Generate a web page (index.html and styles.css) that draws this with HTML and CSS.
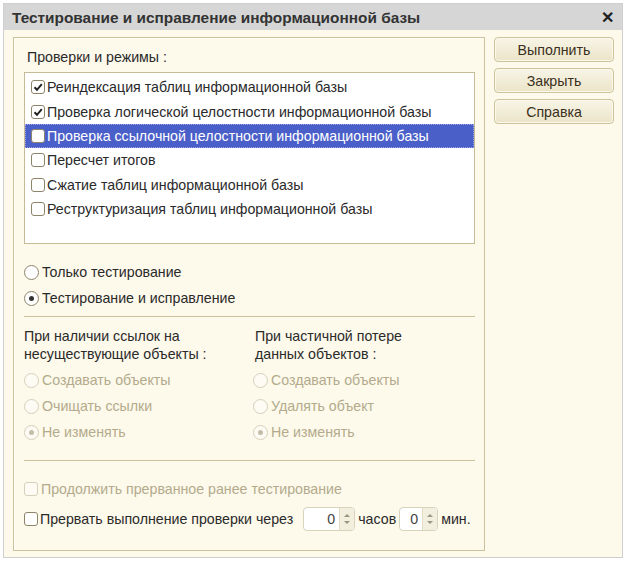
FILE: index.html
```html
<!DOCTYPE html>
<html lang="ru">
<head>
<meta charset="utf-8">
<link rel="stylesheet" href="styles.css">
</head>
<body>
<div class="window">
  <div class="titlebar">
    <span class="title">Тестирование и исправление информационной базы</span>
    <span class="close">✕</span>
  </div>
  <div class="content">
    <div class="group">
      <div class="label top-label">Проверки и режимы :</div>
      <div class="list">
        <div class="row"><span class="cb checked"><svg viewBox="0 0 14 14"><path d="M3.5 7.2 L6 9.8 L10.8 4.2" /></svg></span><span>Реиндексация таблиц информационной базы</span></div>
        <div class="row"><span class="cb checked"><svg viewBox="0 0 14 14"><path d="M3.5 7.2 L6 9.8 L10.8 4.2" /></svg></span><span>Проверка логической целостности информационной базы</span></div>
        <div class="row selected"><span class="cb"></span><span>Проверка ссылочной целостности информационной базы</span></div>
        <div class="row"><span class="cb"></span><span>Пересчет итогов</span></div>
        <div class="row"><span class="cb"></span><span>Сжатие таблиц информационной базы</span></div>
        <div class="row"><span class="cb"></span><span>Реструктуризация таблиц информационной базы</span></div>
      </div>
      <div class="modes">
        <div class="opt"><span class="radio"></span><span>Только тестирование</span></div>
        <div class="opt"><span class="radio on"></span><span>Тестирование и исправление</span></div>
      </div>
      <div class="sep"></div>
      <div class="cols">
        <div class="col">
          <div class="label">При наличии ссылок на<br>несуществующие объекты :</div>
          <div class="opt disabled"><span class="radio"></span><span>Создавать объекты</span></div>
          <div class="opt disabled"><span class="radio"></span><span>Очищать ссылки</span></div>
          <div class="opt disabled"><span class="radio on"></span><span>Не изменять</span></div>
        </div>
        <div class="col col2">
          <div class="label">При частичной потере<br>данных объектов :</div>
          <div class="opt disabled"><span class="radio"></span><span>Создавать объекты</span></div>
          <div class="opt disabled"><span class="radio"></span><span>Удалять объект</span></div>
          <div class="opt disabled"><span class="radio on"></span><span>Не изменять</span></div>
        </div>
      </div>
      <div class="sep sep2"></div>
      <div class="opt disabled cont"><span class="cb"></span><span>Продолжить прерванное ранее тестирование</span></div>
      <div class="opt stop">
        <span class="cb"></span><span class="stoptext">Прервать выполнение проверки через</span>
        <span class="spin wide"><span class="val">0</span><span class="arrows"><i class="up"></i><i class="down"></i></span></span>
        <span class="unit">часов</span>
        <span class="spin"><span class="val">0</span><span class="arrows"><i class="up"></i><i class="down"></i></span></span>
        <span class="unit">мин.</span>
      </div>
    </div>
    <div class="buttons">
      <button class="btn">Выполнить</button>
      <button class="btn">Закрыть</button>
      <button class="btn">Справка</button>
    </div>
  </div>
</div>
</body>
</html>
```
FILE: styles.css
```css
html, body {
  margin: 0;
  padding: 0;
  background: #ffffff;
}
body {
  font-family: "Liberation Sans", Arial, sans-serif;
  font-size: 14.2px;
  color: #2a2a2a;
}
.window {
  margin: 3px 0 0 3px;
  width: 620px;
  height: 555px;
  box-sizing: border-box;
  border: 1px solid #cfcfcf;
  background: #fdf9eb;
  display: flex;
  flex-direction: column;
}
.titlebar {
  height: 26px;
  background: #d6d6d6;
  display: flex;
  align-items: center;
  justify-content: space-between;
  padding: 1px 8px 0 8px;
  box-sizing: border-box;
  flex: none;
}
.title {
  font-weight: bold;
  font-size: 15.4px;
  color: #333;
}
.close {
  font-weight: bold;
  font-size: 16px;
  color: #222;
}
.content {
  flex: 1;
  display: flex;
  padding: 7px 8px 6px 9px;
  gap: 9px;
}
.group {
  width: 472px;
  flex: none;
  box-sizing: border-box;
  border: 1px solid #cbc29d;
  box-shadow: inset 1px 1px 0 #fffef8;
  padding: 0 9px 0 10px;
  display: flex;
  flex-direction: column;
}
.label {
  line-height: 18px;
}
.top-label {
  margin-top: 10px;
  padding-left: 3px;
}
.list {
  margin-top: 6px;
  height: 172px;
  box-sizing: border-box;
  border: 1px solid #c5bc97;
  background: #fff;
  padding-top: 2px;
}
.row {
  height: 24.4px;
  display: flex;
  align-items: center;
  padding-left: 6px;
  gap: 2px;
  box-sizing: border-box;
  white-space: nowrap;
}
.row.selected {
  background: #4b5fc9;
  color: #fff;
  outline: 1px dotted #9aa6e6;
  outline-offset: -1px;
}
.cb {
  width: 14px;
  height: 14px;
  box-sizing: border-box;
  border: 1px solid #8d846a;
  border-radius: 3px;
  background: #fff;
  flex: none;
  display: inline-flex;
}
.cb svg {
  width: 14px;
  height: 14px;
  margin: -1px;
}
.cb svg path {
  fill: none;
  stroke: #222;
  stroke-width: 2;
}
.modes {
  margin-top: 15px;
}
.opt {
  height: 26px;
  display: flex;
  align-items: center;
  gap: 3px;
  white-space: nowrap;
}
.radio {
  width: 15px;
  height: 15px;
  box-sizing: border-box;
  border: 1px solid #8d846a;
  border-radius: 50%;
  background: #fff;
  flex: none;
  display: inline-flex;
  align-items: center;
  justify-content: center;
}
.radio.on::after {
  content: "";
  width: 5px;
  height: 5px;
  border-radius: 50%;
  background: #333;
}
.sep {
  height: 0;
  border-top: 1px solid #cbc29d;
  margin-top: 5px;
}
.cols {
  display: flex;
  margin-top: 10px;
}
.col {
  width: 229px;
  flex: none;
  display: flex;
  flex-direction: column;
}
.col2 {
  width: 220px;
}
.col .label {
  margin-bottom: 4px;
}
.col2 .label {
  padding-left: 2px;
}
.disabled {
  color: #b3ab8c;
}
.disabled .radio, .disabled .cb {
  border-color: #d6d0bb;
  background: #fdfbf3;
}
.disabled .radio.on::after {
  background: #c4bea8;
}
.sep2 {
  margin-top: 15px;
}
.cont {
  margin-top: 15px;
}
.stop {
  margin-top: 4px;
  gap: 2px;
}
.stoptext {
  margin-right: 8px;
}
.spin {
  width: 39px;
  height: 24px;
  box-sizing: border-box;
  border: 1px solid #d9d3bd;
  border-radius: 4px;
  background: #fff;
  display: inline-flex;
  flex: none;
}
.spin.wide {
  width: 52px;
}
.val {
  flex: 1;
  text-align: right;
  padding-right: 4px;
  line-height: 22px;
  color: #444;
}
.arrows {
  width: 14px;
  background: #f3efdf;
  border-left: 1px solid #e2dcc6;
  border-radius: 0 3px 3px 0;
  display: flex;
  flex-direction: column;
  align-items: center;
  justify-content: center;
  gap: 4px;
}
.arrows i {
  width: 0;
  height: 0;
  border-left: 3px solid transparent;
  border-right: 3px solid transparent;
}
.arrows .up {
  border-bottom: 3px solid #9c9680;
}
.arrows .down {
  border-top: 3px solid #9c9680;
}
.unit {
  margin: 0 1px 0 1px;
}
.buttons {
  width: 120px;
  display: flex;
  flex-direction: column;
  gap: 6px;
}
.btn {
  height: 25px;
  box-sizing: border-box;
  font-family: "Liberation Sans", Arial, sans-serif;
  font-size: 14.2px;
  color: #3a3020;
  border: 1px solid #cdc39a;
  border-radius: 4px;
  background: linear-gradient(#f8f5e7, #ebe4c8);
  box-shadow: inset 0 0 0 1px #fbf8ec;
  padding: 0;
}
```
